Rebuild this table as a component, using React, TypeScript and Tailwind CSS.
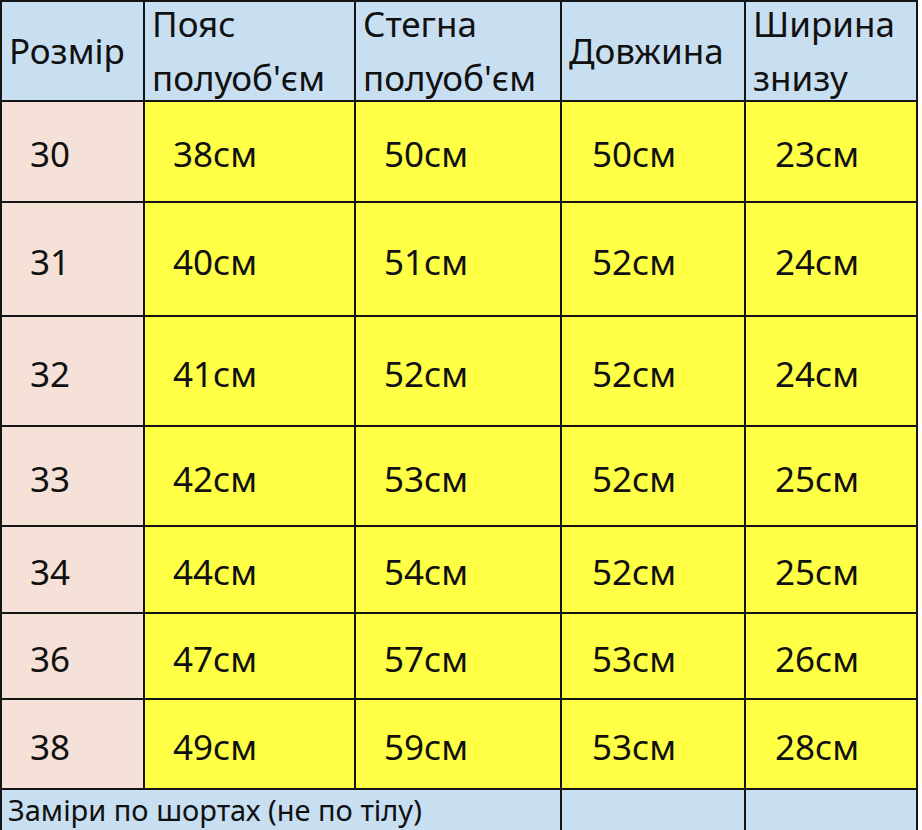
import React from "react";

type Row = { size: string; waist: string; hips: string; length: string; bottom: string; h: string };

const rows: Row[] = [
  { size: "30", waist: "38см", hips: "50см", length: "50см", bottom: "23см", h: "h-[99px]" },
  { size: "31", waist: "40см", hips: "51см", length: "52см", bottom: "24см", h: "h-[112px]" },
  { size: "32", waist: "41см", hips: "52см", length: "52см", bottom: "24см", h: "h-[108px]" },
  { size: "33", waist: "42см", hips: "53см", length: "52см", bottom: "25см", h: "h-[98px]" },
  { size: "34", waist: "44см", hips: "54см", length: "52см", bottom: "25см", h: "h-[85px]" },
  { size: "36", waist: "47см", hips: "57см", length: "53см", bottom: "26см", h: "h-[84px]" },
  { size: "38", waist: "49см", hips: "59см", length: "53см", bottom: "28см", h: "h-[88px]" },
];

// header cell, one or two lines
const HeadCell: React.FC<{ lines: string[] }> = ({ lines }) => (
  <div className="bg-[#c8dff1] flex items-center pl-[7px] h-[98px]">
    <div className="leading-[54px]">
      {lines.map((l) => (
        <div key={l} className="whitespace-nowrap">
          {l}
        </div>
      ))}
    </div>
  </div>
);

const DataCell: React.FC<{ value: string; pink?: boolean; pad: string }> = ({ value, pink, pad }) => (
  <div className={`${pink ? "bg-[#f5e1d7]" : "bg-[#ffff45]"} flex items-center pt-[6px] ${pad}`}>
    {value}
  </div>
);

export default function App() {
  return (
    <div className="w-[922px] h-[830px] overflow-hidden bg-white">
      <div
        className="w-[918px] bg-[#141414] p-[2px] grid grid-cols-[141px_209px_204px_182px_170px] gap-[2px] text-[35px] text-[#111]"
        style={{ fontFamily: '"Noto Sans", "Open Sans", sans-serif' }}
      >
        <HeadCell lines={["Розмір"]} />
        <HeadCell lines={["Пояс", "полуоб'єм"]} />
        <HeadCell lines={["Стегна", "полуоб'єм"]} />
        <HeadCell lines={["Довжина"]} />
        <HeadCell lines={["Ширина", "знизу"]} />

        {rows.map((r) => (
          <React.Fragment key={r.size}>
            <DataCell value={r.size} pink pad={`pl-[28px] ${r.h}`} />
            <DataCell value={r.waist} pad="pl-[28px]" />
            <DataCell value={r.hips} pad="pl-[28px]" />
            <DataCell value={r.length} pad="pl-[30px]" />
            <DataCell value={r.bottom} pad="pl-[29px]" />
          </React.Fragment>
        ))}

        <div className="col-span-3 bg-[#c8dff1] h-[52px] pl-[6px] pt-[1px] text-[29px] leading-[38px] whitespace-nowrap">
          Заміри по шортах (не по тілу)
        </div>
        <div className="bg-[#c8dff1] h-[52px]"></div>
        <div className="bg-[#c8dff1] h-[52px]"></div>
      </div>
    </div>
  );
}
